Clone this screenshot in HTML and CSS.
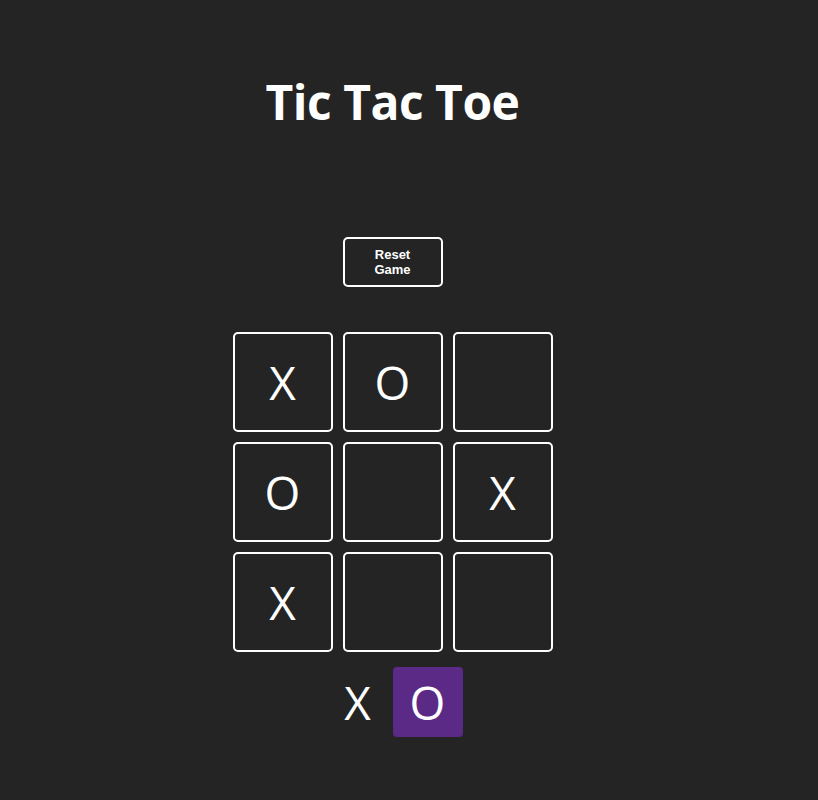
FILE: index.html
```html
<!DOCTYPE html>
<html>
<head>
<meta charset="utf-8">
<link rel="stylesheet" href="styles.css">
</head>
<body>
<div class="app">
  <h1 class="title">Tic Tac Toe</h1>
  <button class="reset">Reset Game</button>
  <div class="board">
    <div class="cell">X</div>
    <div class="cell">O</div>
    <div class="cell"></div>
    <div class="cell">O</div>
    <div class="cell"></div>
    <div class="cell">X</div>
    <div class="cell">X</div>
    <div class="cell"></div>
    <div class="cell"></div>
  </div>
  <div class="turns">
    <div class="turn">X</div>
    <div class="turn active">O</div>
  </div>
</div>
</body>
</html>
```
FILE: styles.css
```css
html, body {
  margin: 0;
  padding: 0;
  background: #242424;
  color: #ffffff;
  font-family: "Open Sans", "Noto Sans", sans-serif;
}
.app {
  display: flex;
  flex-direction: column;
  align-items: center;
  padding-top: 74px;
  padding-right: 33px;
}
.title {
  margin: 0;
  font-size: 48px;
  line-height: 56px;
  font-weight: 700;
  letter-spacing: -0.5px;
}
.reset {
  margin-top: 107px;
  width: 100px;
  height: 50px;
  background: #242424;
  color: #ffffff;
  border: 2px solid #ffffff;
  border-radius: 5px;
  font-family: "Liberation Sans", Arial, sans-serif;
  font-weight: 700;
  font-size: 13px;
  line-height: 15px;
  padding: 0 20px;
}
.board {
  margin-top: 45px;
  display: grid;
  grid-template-columns: repeat(3, 100px);
  grid-auto-rows: 100px;
  gap: 10px;
}
.cell {
  box-sizing: border-box;
  border: 2px solid #ffffff;
  border-radius: 5px;
  display: flex;
  align-items: center;
  justify-content: center;
  font-size: 46px;
  font-weight: 400;
}
.turns {
  margin-top: 15px;
  display: flex;
  gap: 0;
}
.turn {
  width: 70px;
  height: 70px;
  display: flex;
  align-items: center;
  justify-content: center;
  font-size: 46px;
  border-radius: 4px;
}
.turn.active {
  background: #5b2a86;
}
```
